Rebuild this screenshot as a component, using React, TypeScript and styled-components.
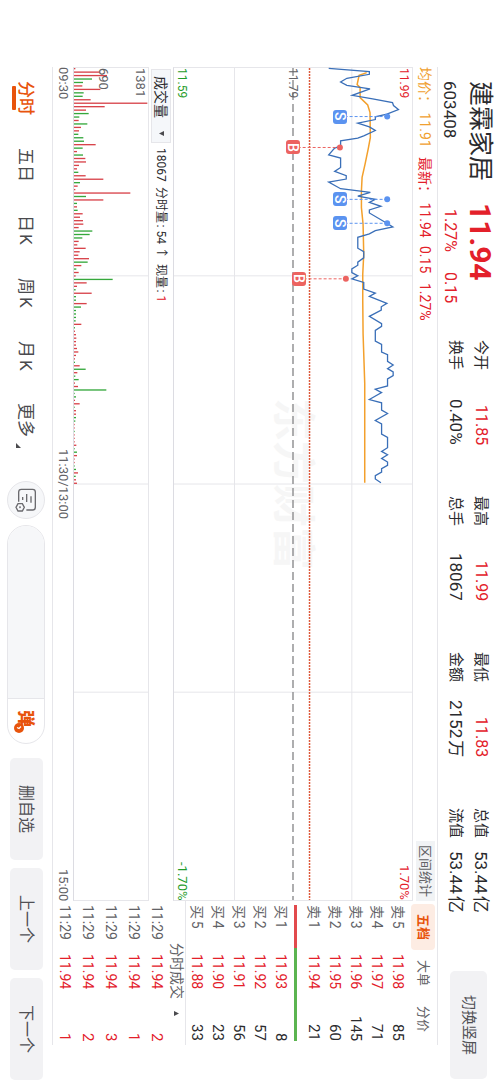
import React from "react";
import styled, { createGlobalStyle } from "styled-components";

const RED = "#e3202a";
const GREEN = "#1f9d2b";
const ORANGE = "#e8540c";
const INK = "#2b2b2e";
const MUTED = "#626266";
const LINE = "#e6e6ea";
const PANEL = "#f2f2f4";

const GlobalStyle = createGlobalStyle`
  * { box-sizing: border-box; }
  body { margin: 0; background: #fff; }
  button, input, select {
    font: inherit; color: inherit; margin: 0; padding: 0; border: 0; background: none;
    writing-mode: inherit; text-orientation: inherit; border-radius: 0;
  }
  button { cursor: pointer; }
`;

/* The trading screen is held in landscape: lines run top to bottom, rows stack right to left. */
const Screen = styled.div`
  writing-mode: vertical-rl;
  text-orientation: sideways;
  text-autospace: normal;
  display: flex;
  flex-direction: column;
  width: 100%;
  height: 100vh;
  font-family: Roboto, "Noto Sans CJK SC", sans-serif;
  font-size: 13px;
  line-height: 20px;
  color: ${INK};
  background: #fff;
  white-space: nowrap;
  overflow: hidden;
`;

const Header = styled.header`
  flex: none;
  display: flex;
  block-size: 62px;
  padding-block-start: 7px;
  padding-inline: 81px 8px;
`;

const Identity = styled.div`
  display: flex;
  flex-direction: column;
  gap: 5px;
  margin-inline-end: 22px;
`;

const StockName = styled.h1`
  margin: 0;
  font-size: 25px;
  line-height: 26px;
  font-weight: 400;
`;

const StockCode = styled.span`
  font-size: 17px;
  line-height: 24px;
`;

const Quote = styled.div`
  display: flex;
  flex-direction: column;
  gap: 5px;
  inline-size: 137px;
  color: ${RED};
`;

const Price = styled.strong`
  font-size: 30px;
  line-height: 26px;
  font-weight: 700;
`;

const Change = styled.div`
  display: flex;
  gap: 20px;
  padding-inline-start: 6px;
  font-size: 16px;
  line-height: 24px;
`;

const Stats = styled.dl`
  flex: 1;
  display: grid;
  grid-template-columns: repeat(4, 1fr);
  grid-template-rows: 25px 24px;
  column-gap: 51px;
  margin: 0;
  margin-inline-end: 58px;
`;

const Stat = styled.div`
  display: flex;
  justify-content: space-between;
  align-items: center;
`;

const StatLabel = styled.dt`
  font-size: 15px;
`;

const StatValue = styled.dd<{ $up?: boolean }>`
  margin: 0;
  font-size: ${(p) => (p.$up ? 16 : 17)}px;
  color: ${(p) => (p.$up ? RED : INK)};
`;

const SoftButton = styled.button<{ $size: number; $length: number }>`
  flex: none;
  block-size: ${(p) => p.$size}px;
  inline-size: ${(p) => p.$length}px;
  border-radius: 5px;
  background: ${PANEL};
  color: #505054;
  font-size: 16px;
  text-align: center;
`;

const RotateButton = styled(SoftButton)`
  margin-block-start: 6px;
  font-size: 15px;
`;

const Main = styled.main`
  flex: 1;
  min-block-size: 0;
  display: flex;
  margin-inline: 67px 42px;
  border-block: 1px solid ${LINE};
`;

const Charts = styled.section`
  flex: 1;
  display: flex;
  flex-direction: column;
`;

const Legend = styled.div`
  flex: none;
  display: flex;
  align-items: center;
  gap: 9px;
  block-size: 24px;
  font-size: 14px;
  color: ${RED};
`;

const LegendItem = styled.span<{ $color?: string }>`
  color: ${(p) => p.$color ?? RED};
`;

const RangeButton = styled.button`
  block-size: 19px;
  margin-inline-start: auto;
  padding-inline: 4px;
  line-height: 19px;
  font-size: 13px;
  color: ${MUTED};
  background: #f1f3f5;
`;

const Plot = styled.div<{ $grow: number }>`
  position: relative;
  flex: ${(p) => p.$grow} 1 0;
  min-block-size: 0;
  border: 1px solid ${LINE};
  border-block-end-color: #dcdce2;
`;

const PlotSvg = styled.svg`
  position: absolute;
  inset: 0;
  width: 100%;
  height: 100%;
  overflow: visible;
  writing-mode: horizontal-tb;
`;

const Watermark = styled.span`
  position: absolute;
  inset: 0;
  display: flex;
  align-items: center;
  justify-content: center;
  font-size: 43px;
  font-weight: 700;
  color: #f6f6f6;
`;

const AxisLabel = styled.span<{ $at: string; $end?: boolean; $color?: string; $size?: number }>`
  position: absolute;
  inset-block-start: ${(p) => p.$at};
  ${(p) => (p.$end ? "inset-inline-end: 0;" : "inset-inline-start: 0;")}
  font-size: ${(p) => p.$size ?? 13}px;
  line-height: 16px;
  color: ${(p) => p.$color ?? MUTED};
`;

const Trade = styled.span<{ $x: number; $y: number; $color: string }>`
  position: absolute;
  left: ${(p) => p.$x}%;
  top: ${(p) => p.$y}%;
  width: 14px;
  height: 14px;
  margin: -7px;
  border-radius: 3px;
  background: ${(p) => p.$color};
  color: #fff;
  font-size: 14px;
  font-weight: 500;
  line-height: 14px;
  text-align: center;
`;

const VolumeBar = styled.div`
  flex: none;
  display: flex;
  align-items: center;
  gap: 5px;
  block-size: 24px;
  padding-inline-start: 2px;
  font-size: 12px;
`;

const IndicatorPicker = styled.label`
  position: relative;
  display: flex;
  align-items: center;
  block-size: 20px;
  inline-size: 74px;
  border: 1px solid ${LINE};
  background: #f5f7fa;
  font-size: 14px;
`;

const IndicatorSelect = styled.select`
  appearance: none;
  inline-size: 100%;
  block-size: 18px;
  line-height: 18px;
  padding-inline-start: 6px;
`;

const Caret = styled.svg`
  flex: none;
  width: 5px;
  height: 5px;
  fill: #4a4a4e;
`;

const PickerCaret = styled(Caret)`
  position: absolute;
  inset-inline-end: 6px;
  pointer-events: none;
`;

const RedText = styled.span`
  color: ${RED};
`;

const TimeAxis = styled.div`
  flex: none;
  display: grid;
  grid-template-columns: 1fr auto 1fr;
  block-size: 20px;
  font-size: 13px;
  color: ${MUTED};
`;

const TimeEnd = styled.span`
  text-align: end;
`;

const Side = styled.aside`
  flex: none;
  display: flex;
  flex-direction: column;
  inline-size: 144px;
`;

const SideTabs = styled.div`
  flex: none;
  display: grid;
  grid-template-columns: repeat(3, 1fr);
  padding-block: 2px 3px;
  padding-inline: 3px;
`;

const SideTab = styled.button<{ $active?: boolean }>`
  block-size: 24px;
  border-radius: 4px;
  font-size: 13px;
  font-weight: ${(p) => (p.$active ? 700 : 400)};
  color: ${(p) => (p.$active ? ORANGE : MUTED)};
  background: ${(p) => (p.$active ? "#fdece3" : "transparent")};
`;

const Ledger = styled.table<{ $row: number }>`
  flex: none;
  table-layout: fixed;
  border-collapse: collapse;
  inline-size: 136px;
  margin-inline-start: 4px;
  font-size: 15px;
  tr { block-size: ${(p) => p.$row}px; }
  td, th { padding: 0; line-height: ${(p) => p.$row}px; font-weight: 400; }
`;

const KeyCell = styled.th`
  inline-size: 49px;
  text-align: start;
  font-size: 14px;
  color: ${MUTED};
`;

const PriceCell = styled.td`
  inline-size: 45px;
  font-size: 14px;
  color: ${RED};
`;

const SizeCell = styled.td<{ $up?: boolean }>`
  text-align: end;
  color: ${(p) => (p.$up ? RED : INK)};
`;

const Balance = styled.div`
  flex: none;
  display: flex;
  block-size: 3px;
  margin-block: 6px 3px;
  margin-inline: 4px;
`;

const BalancePart = styled.span<{ $share: number; $color: string }>`
  flex: ${(p) => p.$share};
  background: ${(p) => p.$color};
`;

const TicksTitle = styled.button`
  flex: none;
  display: flex;
  align-items: center;
  justify-content: center;
  gap: 12px;
  block-size: 18px;
  border-block-start: 1px solid ${LINE};
  padding-inline-start: 12px;
  font-size: 14px;
  line-height: 17px;
  color: ${MUTED};
`;

const Footer = styled.footer`
  flex: none;
  display: flex;
  align-items: center;
  block-size: 52px;
  padding-inline: 81px 7px;
`;

const Periods = styled.nav`
  display: flex;
  gap: 33px;
`;

const Period = styled.button<{ $active?: boolean }>`
  position: relative;
  font-size: 17px;
  line-height: 24px;
  color: ${(p) => (p.$active ? ORANGE : "#4a4a4e")};
  font-weight: ${(p) => (p.$active ? 500 : 400)};

  &::after {
    content: "";
    display: ${(p) => (p.$active ? "block" : "none")};
    position: absolute;
    inset-block-end: -2px;
    inset-inline: 5px;
    block-size: 4px;
    border-radius: 1px;
    background: ${ORANGE};
  }
`;

const MoreMark = styled(Caret)`
  position: absolute;
  inset-block-end: 2px;
  inset-inline-end: -11px;
`;

const NoteButton = styled.button`
  flex: none;
  display: flex;
  align-items: center;
  justify-content: center;
  block-size: 38px;
  inline-size: 38px;
  margin-inline-start: auto;
  border: 1px solid ${LINE};
  border-radius: 50%;
  background: #f6f7f9;
`;

const CommentBox = styled.div`
  flex: none;
  display: flex;
  block-size: 38px;
  inline-size: 219px;
  margin-inline: 6px 14px;
  border: 1px solid ${LINE};
  border-radius: 19px;
  overflow: hidden;
`;

const CommentInput = styled.input`
  flex: 1;
  min-inline-size: 0;
  padding-inline: 14px;
  background: #f6f7f9;
  outline: none;
`;

const BulletButton = styled.button`
  position: relative;
  flex: none;
  inline-size: 45px;
  padding-inline-end: 6px;
  border-inline-start: 1px solid ${LINE};
  font-size: 17px;
  font-weight: 900;
  color: ${ORANGE};
`;

const ClockBadge = styled.svg`
  position: absolute;
  inset-block-end: 6px;
  inset-inline-end: 9px;
  width: 11px;
  height: 11px;
`;

const Actions = styled.div`
  display: flex;
  gap: 8px;
`;

type StatItem = { label: string; value: string; up?: boolean };

const stats: StatItem[] = [
  { label: "今开", value: "11.85", up: true },
  { label: "最高", value: "11.99", up: true },
  { label: "最低", value: "11.83", up: true },
  { label: "总值", value: "53.44亿" },
  { label: "换手", value: "0.40%" },
  { label: "总手", value: "18067" },
  { label: "金额", value: "2152万" },
  { label: "流值", value: "53.44亿" },
];

type Level = [string, string, string];

const asks: Level[] = [
  ["卖5", "11.98", "85"],
  ["卖4", "11.97", "71"],
  ["卖3", "11.96", "145"],
  ["卖2", "11.95", "60"],
  ["卖1", "11.94", "21"],
];

const bids: Level[] = [
  ["买1", "11.93", "8"],
  ["买2", "11.92", "57"],
  ["买3", "11.91", "56"],
  ["买4", "11.90", "23"],
  ["买5", "11.88", "33"],
];

const ticks: Level[] = [
  ["11:29", "11.94", "2"],
  ["11:29", "11.94", "1"],
  ["11:29", "11.94", "3"],
  ["11:29", "11.94", "2"],
  ["11:29", "11.94", "1"],
];

/* Price plot space: 720 units of price (left to right) by 2502 units of time (top to bottom). */
const PRICE_W = 720;
const TIME_H = 2502;

const priceLine =
  "468,1 591,11 591,19 523,31 504,42 523,52 593,63 539,82 601,93 661,104 664,113 679,125 644,139 609,147 609,155 556,166 591,177 609,188 574,204 556,211 504,219 504,235 486,241 468,261 504,271 504,299 486,311 521,324 521,334 468,343 504,363 594,374 556,385 609,395 591,404 626,416 591,427 591,436 644,467 662,478 609,489 591,499 556,509 556,542 574,552 574,571 556,584 556,593 538,604 538,615 556,625 538,634 574,645 574,665 609,677 591,687 644,708 627,718 627,728 591,747 628,769 628,777 609,789 609,821 628,831 628,854 646,862 646,882 663,893 646,904 663,914 663,925 646,935 646,956 609,966 628,976 591,997 628,1007 628,1029 646,1039 609,1060 628,1070 628,1101 646,1111 646,1142 628,1153 646,1163 628,1174 646,1185 646,1195 628,1205 628,1215 609,1226 609,1236 626,1247";

const averageLine =
  "583,14 560,22 554,50 563,59 563,89 586,111 593,134 594,209 588,241 578,289 569,329 567,369 567,420 572,470 574,560 571,620 571,700 572,799 577,949 577,1247";

type Deal = { side: "S" | "B"; box: number; dot: number; time: number };

const deals: Deal[] = [
  { side: "S", box: 501, dot: 645, time: 146 },
  { side: "B", box: 359, dot: 502, time: 239 },
  { side: "S", box: 501, dot: 645, time: 395 },
  { side: "S", box: 501, dot: 645, time: 467 },
  { side: "B", box: 377, dot: 520, time: 634 },
];

const dealColor = { S: "#5b93f0", B: "#ec6360" };

/* One entry per minute from 09:30: bar length, then r for a rise or g for a fall. */
const volumes =
  "4r 79r 99r 54g 27g 25r 79r 29g 26g 50r 220r 92r 36r 44g 16g 14r 40g 21r 15r 13g 28g 30g 65r 26g 9r 27g 34r 36r 15r 9r 13g 35r 88r 18g 11r 4r 169r 36g 88r 9g 9r 11g 26r 18r 27r 28r 14r 55g 47g 25g 14r 10r 35r 17r 13r 45r 41g 22r 7g 14r 5r 116g 38r 9r 5g 53r 6g 6g 38r 21g 6g 6g 6g 5g 22r 3g 3r 6r 7r 6r 6r 9r 13r 6r 3r 3g 17r 35g 10r 4g 14g 3r 12r 97g 2g 6g 3r 17r 2g 6r 6r 6g 4g 2r 2r 2g 2r 2r 2r 7r 2g 9g 9r 2r 2r 2g 6g 12r 5g 6r 9r"
    .split(" ")
    .map((v) => ({ length: parseInt(v, 10), up: v.endsWith("r") }));

function PricePlot() {
  return (
    <Plot $grow={238}>
      <Watermark aria-hidden="true">东方财富</Watermark>
      <PlotSvg viewBox={`0 0 ${PRICE_W} ${TIME_H}`} preserveAspectRatio="none" aria-label="分时走势">
        <path
          d="M183 0V2502M538 0V2502M0 625H720M0 1251H720M0 1877H720"
          stroke={LINE}
          strokeWidth="1"
          vectorEffect="non-scaling-stroke"
        />
        <path
          d="M360 0V2502"
          stroke="#9a9a9c"
          strokeWidth="1.6"
          strokeDasharray="8 4"
          vectorEffect="non-scaling-stroke"
        />
        <path
          d="M410 0V2502"
          stroke="#dd5a3c"
          strokeWidth="1.5"
          strokeDasharray="2 1"
          vectorEffect="non-scaling-stroke"
        />
        <polyline points={averageLine} fill="none" stroke="#f3a02c" strokeWidth="1.5" vectorEffect="non-scaling-stroke" />
        <polyline points={priceLine} fill="none" stroke="#3a6fb8" strokeWidth="1.3" vectorEffect="non-scaling-stroke" />
        {deals.map((d) => (
          <g key={d.time}>
            <path
              d={`M${d.box} ${d.time}H${d.dot}`}
              stroke={dealColor[d.side]}
              strokeWidth="1"
              strokeDasharray="3 2"
              vectorEffect="non-scaling-stroke"
            />
            <circle cx={d.dot} cy={d.time} r="9" fill={dealColor[d.side]} />
          </g>
        ))}
      </PlotSvg>
      {deals.map((d) => (
        <Trade
          key={d.time}
          $x={(d.box / PRICE_W) * 100}
          $y={(d.time / TIME_H) * 100}
          $color={dealColor[d.side]}
        >
          {d.side}
        </Trade>
      ))}
      <AxisLabel $at="0px" $size={12} $color={RED}>11.99</AxisLabel>
      <AxisLabel $at="calc(50% - 8px)" $size={12}>11.79</AxisLabel>
      <AxisLabel $at="calc(100% - 16px)" $size={12} $color={GREEN}>11.59</AxisLabel>
      <AxisLabel $at="0px" $end $color={RED}>1.70%</AxisLabel>
      <AxisLabel $at="calc(100% - 16px)" $end $color={GREEN}>-1.70%</AxisLabel>
    </Plot>
  );
}

function VolumePlot() {
  return (
    <Plot $grow={74}>
      <PlotSvg viewBox="0 0 222 2502" preserveAspectRatio="none" aria-label="成交量">
        <path
          d="M0 625H222M0 1251H222M0 1877H222"
          stroke={LINE}
          strokeWidth="1"
          vectorEffect="non-scaling-stroke"
        />
        {volumes.map((v, i) => (
          <rect
            key={i}
            x="0"
            y={i * 10.39}
            width={v.length}
            height="4"
            fill={v.up ? "#d8434a" : "#35a83c"}
          />
        ))}
      </PlotSvg>
      <AxisLabel $at="0px">1381</AxisLabel>
      <AxisLabel $at="50%">690</AxisLabel>
    </Plot>
  );
}

function Levels({ rows }: { rows: Level[] }) {
  return (
    <Ledger $row={21}>
      <tbody>
        {rows.map(([name, price, size]) => (
          <tr key={name}>
            <KeyCell scope="row">{name}</KeyCell>
            <PriceCell>{price}</PriceCell>
            <SizeCell>{size}</SizeCell>
          </tr>
        ))}
      </tbody>
    </Ledger>
  );
}

function NoteIcon() {
  return (
    <svg width="22" height="24" viewBox="45 54 66 72" fill="none" stroke="#6a6a6e" strokeWidth="4" aria-hidden="true">
      <path d="M56 95V66a8 8 0 0 1 8-8h34a8 8 0 0 1 8 8v46a8 8 0 0 1-8 8H79" />
      <path d="M68 81v9M80 72v24M93 79v19" />
      <path d="M48 112l6-11h13l6 11-6 11H54z" />
      <circle cx="60" cy="112" r="1" />
    </svg>
  );
}

export default function App() {
  return (
    <>
      <GlobalStyle />
      <Screen lang="zh-CN">
        <Header>
          <Identity>
            <StockName>建霖家居</StockName>
            <StockCode>603408</StockCode>
          </Identity>
          <Quote>
            <Price>11.94</Price>
            <Change>
              <span>1.27%</span>
              <span>0.15</span>
            </Change>
          </Quote>
          <Stats>
            {stats.map((s) => (
              <Stat key={s.label}>
                <StatLabel>{s.label}</StatLabel>
                <StatValue $up={s.up}>{s.value}</StatValue>
              </Stat>
            ))}
          </Stats>
          <RotateButton type="button" $size={37} $length={108}>切换竖屏</RotateButton>
        </Header>

        <Main>
          <Charts>
            <Legend>
              <LegendItem $color="#f0a030">均价： 11.91</LegendItem>
              <LegendItem>最新： 11.94</LegendItem>
              <LegendItem>0.15</LegendItem>
              <LegendItem>1.27%</LegendItem>
              <RangeButton type="button">区间统计</RangeButton>
            </Legend>
            <PricePlot />
            <VolumeBar>
              <IndicatorPicker>
                <IndicatorSelect aria-label="指标" defaultValue="成交量">
                  <option>成交量</option>
                </IndicatorSelect>
                <PickerCaret viewBox="0 0 6 6" aria-hidden="true">
                  <path d="M0 3L6 0V6Z" />
                </PickerCaret>
              </IndicatorPicker>
              <span>18067</span>
              <span>分时量: 54 ↑</span>
              <span>
                现量: <RedText>1</RedText>
              </span>
            </VolumeBar>
            <VolumePlot />
            <TimeAxis>
              <span>09:30</span>
              <span>11:30/13:00</span>
              <TimeEnd>15:00</TimeEnd>
            </TimeAxis>
          </Charts>

          <Side>
            <SideTabs>
              <SideTab type="button" $active>五档</SideTab>
              <SideTab type="button">大单</SideTab>
              <SideTab type="button">分价</SideTab>
            </SideTabs>
            <Levels rows={asks} />
            <Balance>
              <BalancePart $share={43} $color="#e24a4d" />
              <BalancePart $share={93} $color="#5bb450" />
            </Balance>
            <Levels rows={bids} />
            <TicksTitle type="button">
              分时成交
              <Caret viewBox="0 0 6 6" aria-hidden="true">
                <path d="M0 0L6 3L0 6Z" />
              </Caret>
            </TicksTitle>
            <Ledger $row={23}>
              <tbody>
                {ticks.map(([time, price, size], i) => (
                  <tr key={i}>
                    <KeyCell scope="row">{time}</KeyCell>
                    <PriceCell>{price}</PriceCell>
                    <SizeCell $up>{size}</SizeCell>
                  </tr>
                ))}
              </tbody>
            </Ledger>
          </Side>
        </Main>

        <Footer>
          <Periods>
            <Period type="button" $active>分时</Period>
            <Period type="button">五日</Period>
            <Period type="button">日K</Period>
            <Period type="button">周K</Period>
            <Period type="button">月K</Period>
            <Period type="button">
              更多
              <MoreMark viewBox="0 0 6 6" aria-hidden="true">
                <path d="M0 0V6H6Z" />
              </MoreMark>
            </Period>
          </Periods>
          <NoteButton type="button" aria-label="笔记设置">
            <NoteIcon />
          </NoteButton>
          <CommentBox>
            <CommentInput type="text" aria-label="发弹幕" />
            <BulletButton type="button">
              弹
              <ClockBadge viewBox="0 0 11 11" aria-hidden="true">
                <circle cx="5" cy="5" r="5" fill={ORANGE} />
                <path d="M7 3.5L5 5.5L3 4.5" stroke="#fff" strokeWidth="1.2" fill="none" />
              </ClockBadge>
            </BulletButton>
          </CommentBox>
          <Actions>
            <SoftButton type="button" $size={33} $length={102}>删自选</SoftButton>
            <SoftButton type="button" $size={33} $length={102}>上一个</SoftButton>
            <SoftButton type="button" $size={33} $length={102}>下一个</SoftButton>
          </Actions>
        </Footer>
      </Screen>
    </>
  );
}
